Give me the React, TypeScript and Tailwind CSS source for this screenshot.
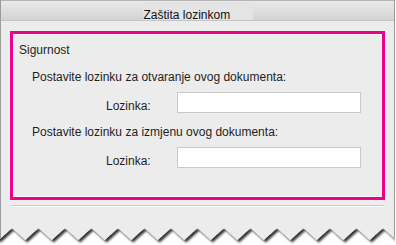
const PEAK0 = 12;
const PERIOD = 26.5;
const DEPTH = 12;

function tornEdge() {
  const pts: string[] = ['-4,-2'];
  for (let k = -1; k < 16; k++) {
    const hi = PEAK0 + k * PERIOD;
    pts.push(`${hi},0`);
    pts.push(`${hi + PERIOD / 2},${DEPTH}`);
  }
  pts.push('400,-2');
  return pts.join(' ');
}

const PasswordRow = () => (
  <div className="flex ml-[87px]">
    <span className="w-[71px] pt-[7px]">Lozinka:</span>
    <div className="w-[184px] h-[21px] bg-white border border-[#c9c9c9]" />
  </div>
);

export default function App() {
  return (
    <div className="w-[396px] h-[245px] bg-white overflow-hidden font-['Liberation_Sans',Arial,sans-serif] text-[12px] leading-[14px] text-[#1e1e1e]">
      {/* dialog window */}
      <div className="w-[395px] h-[228px] flex flex-col border-x border-[#9c9c9c] bg-[#ececec]">
        {/* title bar */}
        <div className="h-[21px] flex justify-center border-t border-b border-t-[#b4b4b4] border-b-[#c4c4c4] bg-gradient-to-b from-[#eaeaea] to-[#d3d3d3]">
          <div className="w-[110px] h-[18px] mt-[1px] pl-[1px] pt-[6px] bg-[#e4e4e4] text-[#111]">
            Zaštita lozinkom
          </div>
        </div>

        <div className="pt-[10px] px-[9px]">
          {/* highlighted group */}
          <div className="border-[3px] border-[#ec008c]">
            <div className="border border-[#f8faf8] pl-[5px] pt-[8px] pb-[28px]">
              <p>Sigurnost</p>
              <p className="ml-[13px] mt-[13px]">Postavite lozinku za otvaranje ovog dokumenta:</p>
              <div className="mt-[8px]">
                <PasswordRow />
              </div>
              <p className="ml-[13px] mt-[12px]">Postavite lozinku za izmjenu ovog dokumenta:</p>
              <div className="mt-[8px]">
                <PasswordRow />
              </div>
            </div>
          </div>
        </div>

        {/* separator */}
        <div className="mx-[10px] mt-[5px] h-[2px] border-t border-b border-t-[#cdcdcd] border-b-[#fafafa]" />
      </div>

      {/* torn bottom edge */}
      <svg width="396" height="17" className="block">
        <defs>
          <filter id="torn" x="-5%" y="-50%" width="110%" height="200%">
            <feDropShadow dx="2" dy="2.5" stdDeviation="0.9" floodColor="#000" floodOpacity="0.8" />
          </filter>
          <clipPath id="win">
            <rect x="0" y="-2" width="395" height="20" />
          </clipPath>
        </defs>
        <polygon points={tornEdge()} fill="#ececec" filter="url(#torn)" clipPath="url(#win)" />
        <line x1="0.5" y1="0" x2="0.5" y2="11" stroke="#9c9c9c" />
        <line x1="394.5" y1="0" x2="394.5" y2="10" stroke="#9c9c9c" />
      </svg>
    </div>
  );
}
